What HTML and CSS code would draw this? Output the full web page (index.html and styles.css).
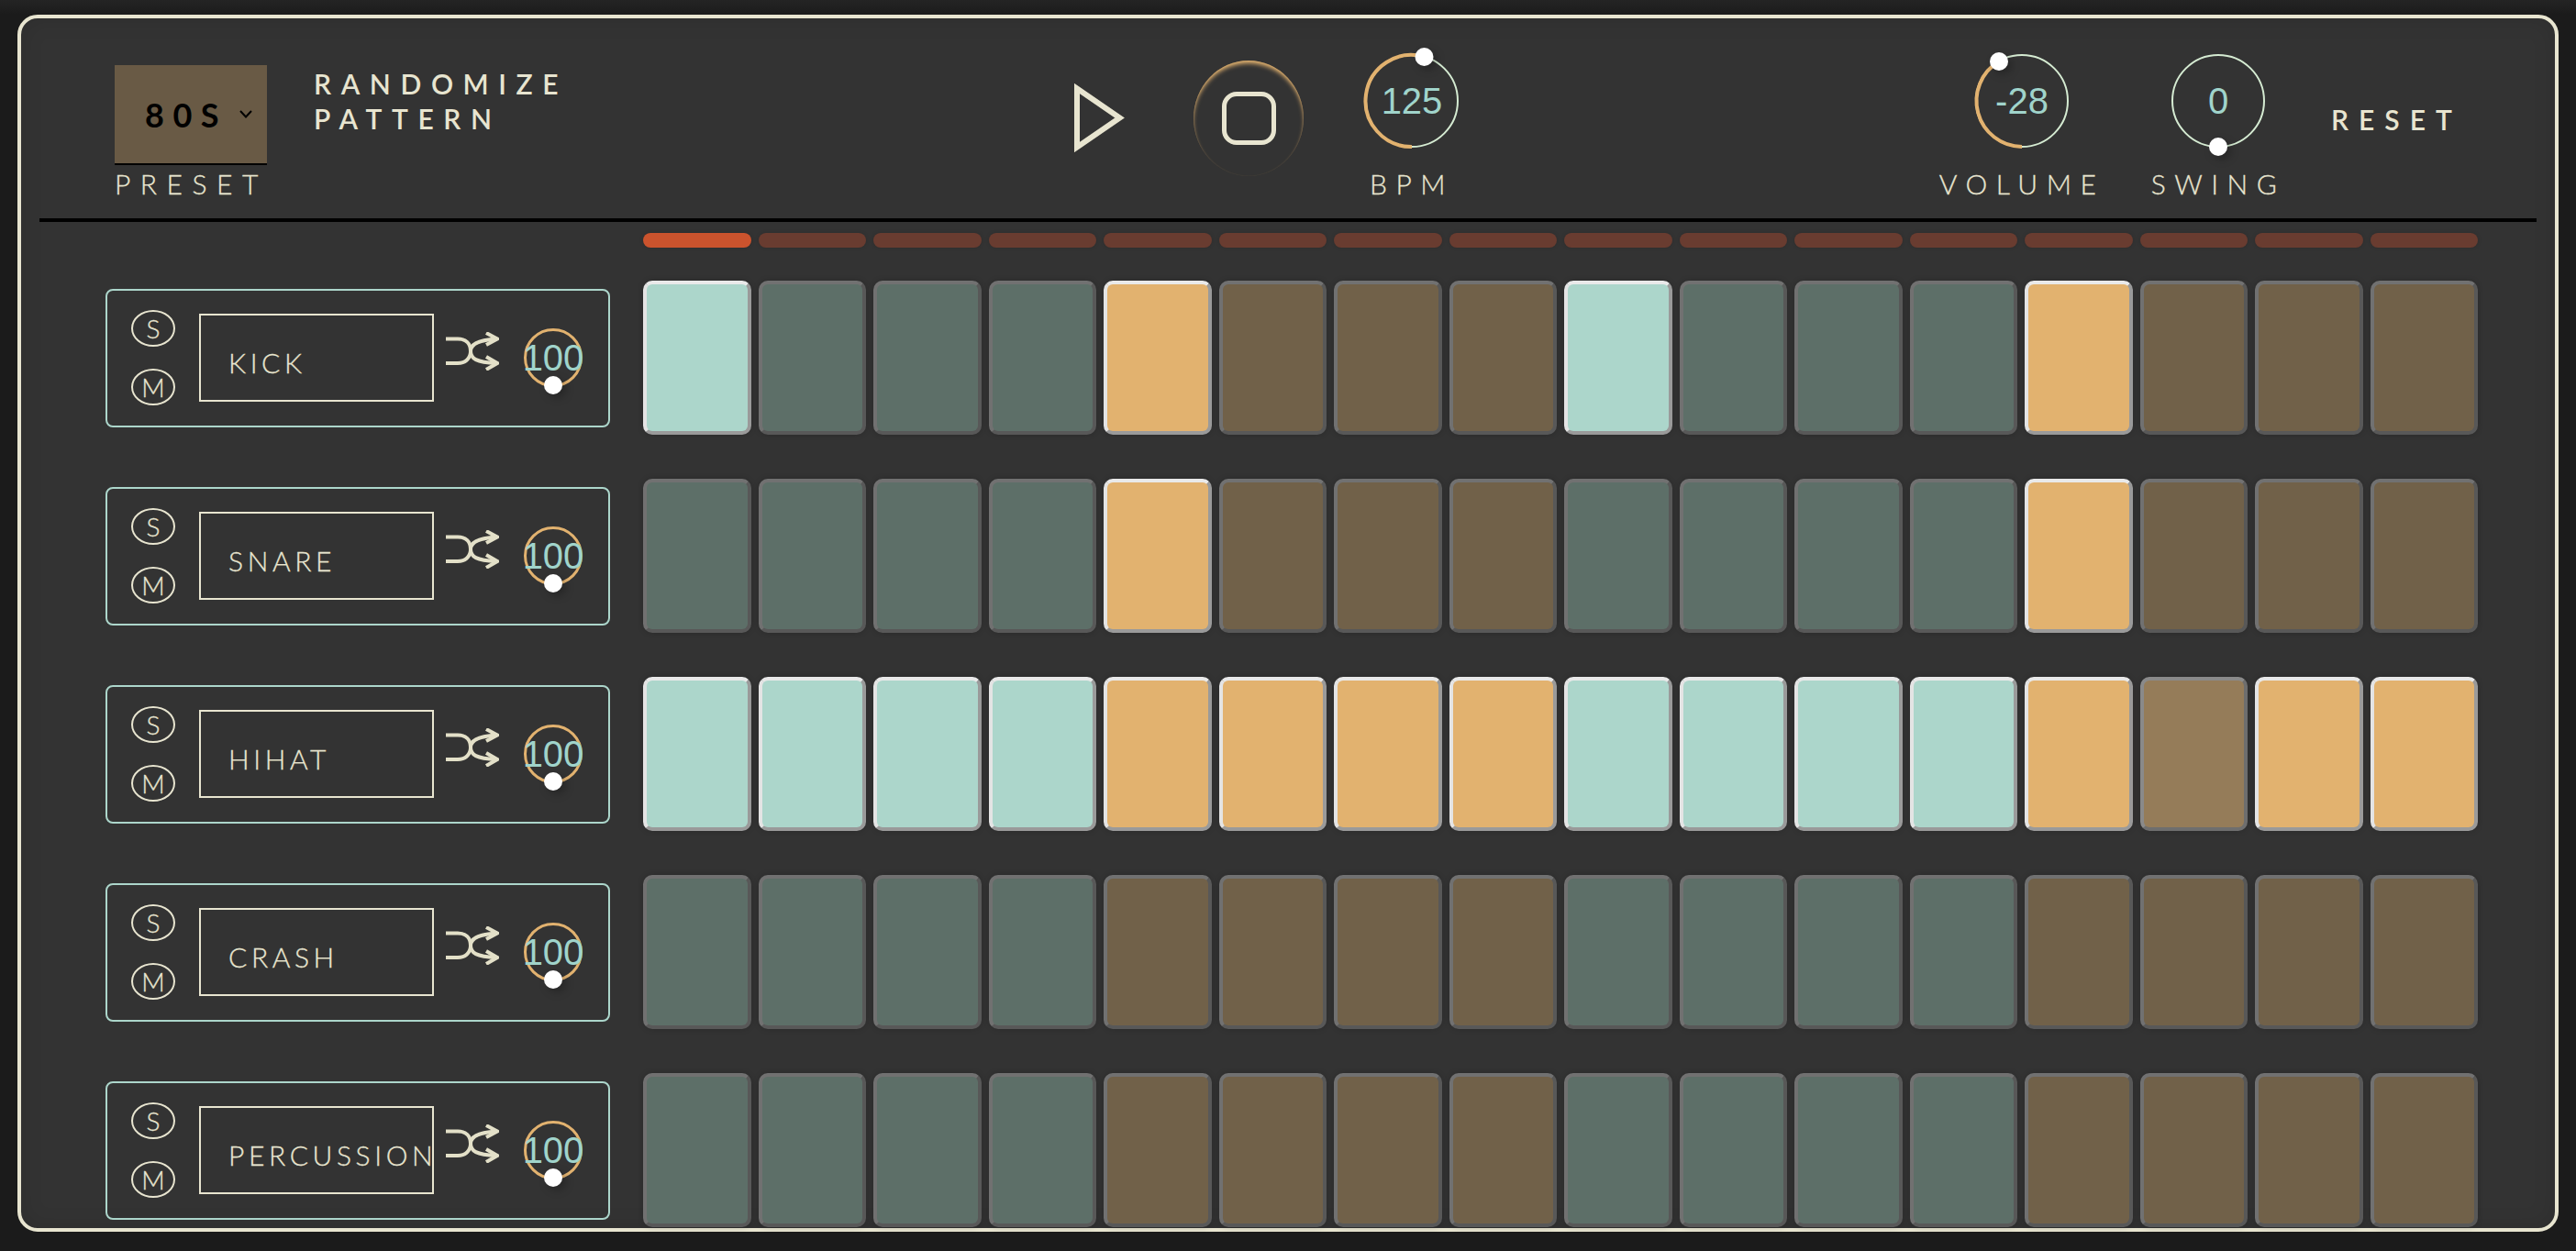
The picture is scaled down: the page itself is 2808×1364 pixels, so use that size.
FILE: index.html
```html
<!DOCTYPE html>
<html lang="en">
<head>
    <meta charset="UTF-8">
    <title>Drum Sequencer</title>
    <link rel="stylesheet" href="styles.css">
</head>
<body>
    <div class="frame">
        <header class="header">
            <div class="left">
                <div class="preset">
                    <div class="preset-select">
                        <span class="preset-value">80S</span>
                        <svg class="chevron" viewBox="0 0 14 9"><path d="M1 1l6 6.5L13 1"/></svg>
                    </div>
                    <div class="label preset-label">PRESET</div>
                </div>
                <button class="randomize">RANDOMIZE<br>PATTERN</button>
            </div>
            <svg class="play" viewBox="0 0 55 75"><polygon points="3,5.5 49.6,37.5 3,69.5"/></svg>
            <div class="stop"><span class="stop-icon"></span></div>
            <div class="control bpm">
                <div class="knob">
                    <svg viewBox="0 0 102 102">
                        <circle class="ring" cx="51" cy="51" r="50"/>
                        <path class="arc" d="M51 101A50 50 0 1 1 64.5 3"/>
                        <circle class="handle" cx="64.5" cy="3" r="10"/>
                    </svg>
                    <span class="knob-value">125</span>
                </div>
                <div class="label">BPM</div>
            </div>
            <div class="control volume">
                <div class="knob">
                    <svg viewBox="0 0 102 102">
                        <circle class="ring" cx="51" cy="51" r="50"/>
                        <path class="arc" d="M51 101A50 50 0 0 1 26 8"/>
                        <circle class="handle" cx="26" cy="8" r="10"/>
                    </svg>
                    <span class="knob-value">-28</span>
                </div>
                <div class="label">VOLUME</div>
            </div>
            <div class="control swing">
                <div class="knob">
                    <svg viewBox="0 0 102 102">
                        <circle class="ring" cx="51" cy="51" r="50"/>
                        <circle class="handle" cx="51" cy="101" r="10"/>
                    </svg>
                    <span class="knob-value">0</span>
                </div>
                <div class="label">SWING</div>
            </div>
            <button class="reset">RESET</button>
        </header>

        <div class="steps">
            <div class="step current"></div>
            <div class="step"></div><div class="step"></div><div class="step"></div>
            <div class="step"></div><div class="step"></div><div class="step"></div><div class="step"></div>
            <div class="step"></div><div class="step"></div><div class="step"></div><div class="step"></div>
            <div class="step"></div><div class="step"></div><div class="step"></div><div class="step"></div>
        </div>

        <div class="rows">
            <div class="row">
                <div class="track">
                    <div class="solo-mute"><button class="pill">S</button><button class="pill">M</button></div>
                    <div class="track-name">KICK</div>
                    <svg class="shuffle" viewBox="0 0 58 42"><path d="M0 7.5H13C22 7.5 27 13 27 21C27 29 33 33 55 34"/><path d="M0 34H13C22 34 27 28 27 21C27 14 33 9 55 7.5"/><path d="M44 1L56 7.5L44 14M44 27L56 34L44 41"/></svg>
                    <div class="knob small">
                        <svg viewBox="0 0 64 64"><circle class="arc" cx="32" cy="32" r="30.5"/><circle class="handle" cx="32" cy="62" r="10"/></svg>
                        <span class="knob-value">100</span>
                    </div>
                </div>
                <div class="pads">
                    <div class="pad on"></div><div class="pad"></div><div class="pad"></div><div class="pad"></div>
                    <div class="pad on"></div><div class="pad"></div><div class="pad"></div><div class="pad"></div>
                    <div class="pad on"></div><div class="pad"></div><div class="pad"></div><div class="pad"></div>
                    <div class="pad on"></div><div class="pad"></div><div class="pad"></div><div class="pad"></div>
                </div>
            </div>
            <div class="row">
                <div class="track">
                    <div class="solo-mute"><button class="pill">S</button><button class="pill">M</button></div>
                    <div class="track-name">SNARE</div>
                    <svg class="shuffle" viewBox="0 0 58 42"><path d="M0 7.5H13C22 7.5 27 13 27 21C27 29 33 33 55 34"/><path d="M0 34H13C22 34 27 28 27 21C27 14 33 9 55 7.5"/><path d="M44 1L56 7.5L44 14M44 27L56 34L44 41"/></svg>
                    <div class="knob small">
                        <svg viewBox="0 0 64 64"><circle class="arc" cx="32" cy="32" r="30.5"/><circle class="handle" cx="32" cy="62" r="10"/></svg>
                        <span class="knob-value">100</span>
                    </div>
                </div>
                <div class="pads">
                    <div class="pad"></div><div class="pad"></div><div class="pad"></div><div class="pad"></div>
                    <div class="pad on"></div><div class="pad"></div><div class="pad"></div><div class="pad"></div>
                    <div class="pad"></div><div class="pad"></div><div class="pad"></div><div class="pad"></div>
                    <div class="pad on"></div><div class="pad"></div><div class="pad"></div><div class="pad"></div>
                </div>
            </div>
            <div class="row">
                <div class="track">
                    <div class="solo-mute"><button class="pill">S</button><button class="pill">M</button></div>
                    <div class="track-name">HIHAT</div>
                    <svg class="shuffle" viewBox="0 0 58 42"><path d="M0 7.5H13C22 7.5 27 13 27 21C27 29 33 33 55 34"/><path d="M0 34H13C22 34 27 28 27 21C27 14 33 9 55 7.5"/><path d="M44 1L56 7.5L44 14M44 27L56 34L44 41"/></svg>
                    <div class="knob small">
                        <svg viewBox="0 0 64 64"><circle class="arc" cx="32" cy="32" r="30.5"/><circle class="handle" cx="32" cy="62" r="10"/></svg>
                        <span class="knob-value">100</span>
                    </div>
                </div>
                <div class="pads">
                    <div class="pad on"></div><div class="pad on"></div><div class="pad on"></div><div class="pad on"></div>
                    <div class="pad on"></div><div class="pad on"></div><div class="pad on"></div><div class="pad on"></div>
                    <div class="pad on"></div><div class="pad on"></div><div class="pad on"></div><div class="pad on"></div>
                    <div class="pad on"></div><div class="pad hover"></div><div class="pad on"></div><div class="pad on"></div>
                </div>
            </div>
            <div class="row">
                <div class="track">
                    <div class="solo-mute"><button class="pill">S</button><button class="pill">M</button></div>
                    <div class="track-name">CRASH</div>
                    <svg class="shuffle" viewBox="0 0 58 42"><path d="M0 7.5H13C22 7.5 27 13 27 21C27 29 33 33 55 34"/><path d="M0 34H13C22 34 27 28 27 21C27 14 33 9 55 7.5"/><path d="M44 1L56 7.5L44 14M44 27L56 34L44 41"/></svg>
                    <div class="knob small">
                        <svg viewBox="0 0 64 64"><circle class="arc" cx="32" cy="32" r="30.5"/><circle class="handle" cx="32" cy="62" r="10"/></svg>
                        <span class="knob-value">100</span>
                    </div>
                </div>
                <div class="pads">
                    <div class="pad"></div><div class="pad"></div><div class="pad"></div><div class="pad"></div>
                    <div class="pad"></div><div class="pad"></div><div class="pad"></div><div class="pad"></div>
                    <div class="pad"></div><div class="pad"></div><div class="pad"></div><div class="pad"></div>
                    <div class="pad"></div><div class="pad"></div><div class="pad"></div><div class="pad"></div>
                </div>
            </div>
            <div class="row">
                <div class="track">
                    <div class="solo-mute"><button class="pill">S</button><button class="pill">M</button></div>
                    <div class="track-name">PERCUSSION</div>
                    <svg class="shuffle" viewBox="0 0 58 42"><path d="M0 7.5H13C22 7.5 27 13 27 21C27 29 33 33 55 34"/><path d="M0 34H13C22 34 27 28 27 21C27 14 33 9 55 7.5"/><path d="M44 1L56 7.5L44 14M44 27L56 34L44 41"/></svg>
                    <div class="knob small">
                        <svg viewBox="0 0 64 64"><circle class="arc" cx="32" cy="32" r="30.5"/><circle class="handle" cx="32" cy="62" r="10"/></svg>
                        <span class="knob-value">100</span>
                    </div>
                </div>
                <div class="pads">
                    <div class="pad"></div><div class="pad"></div><div class="pad"></div><div class="pad"></div>
                    <div class="pad"></div><div class="pad"></div><div class="pad"></div><div class="pad"></div>
                    <div class="pad"></div><div class="pad"></div><div class="pad"></div><div class="pad"></div>
                    <div class="pad"></div><div class="pad"></div><div class="pad"></div><div class="pad"></div>
                </div>
            </div>
        </div>
    </div>
</body>
</html>
```
FILE: styles.css
```css
:root {
    --cream: #e8e5d0;
    --teal: #acd6cb;
    --tealdim: #5d6f68;
    --orange: #e2b26f;
    --orangedim: #716149;
    --panel: #333;
    --ringgreen: #d5ebd2;
}
* {
    margin: 0;
    padding: 0;
    box-sizing: border-box;
}
body {
    background: linear-gradient(#242424, #1b1b1b 16px);
    height: 1364px;
    overflow: hidden;
    padding-top: 16px;
    font-family: 'Lato', 'Liberation Sans', sans-serif;
    color: var(--cream);
}
button {
    background: none;
    border: none;
    color: var(--cream);
    font-family: inherit;
}
.frame {
    width: 2770px;
    height: 1327px;
    margin: 0 19px;
    background-color: var(--panel);
    border: 4px solid var(--cream);
    border-radius: 22px;
    box-shadow: inset 0 0 24px rgba(0, 0, 0, .12);
}

/* top bar */
.header {
    display: flex;
    align-items: flex-start;
    height: 222px;
    margin: 0 20px;
    border-bottom: 4px solid #000;
}
.left {
    display: flex;
    align-items: flex-start;
    width: 1128px;
    padding-left: 82px;
}
.preset {
    width: 166px;
    margin-top: 51px;
}
.preset-select {
    display: flex;
    align-items: center;
    height: 109px;
    padding-left: 33px;
    background-color: #695a45;
    border-bottom: 2px solid #000;
}
.preset-value {
    font-size: 36px;
    font-weight: 700;
    letter-spacing: 9.5px;
    color: #000;
}
.chevron {
    width: 14px;
    height: 9px;
    margin-left: 13px;
    fill: none;
    stroke: #000;
    stroke-width: 2;
}
.label {
    font-size: 30px;
    font-weight: 300;
    line-height: 36px;
    letter-spacing: 9.5px;
    white-space: nowrap;
    -webkit-text-stroke: .3px currentColor;
}
.preset-label {
    margin-top: 2px;
    letter-spacing: 10.5px;
}
.randomize {
    margin: 52px 0 0 51px;
    font-size: 30px;
    font-weight: 600;
    line-height: 38px;
    letter-spacing: 10.6px;
    text-align: left;
}
.play {
    flex: none;
    width: 55px;
    height: 75px;
    margin-top: 71px;
    fill: none;
    stroke: var(--cream);
    stroke-width: 6;
}
.stop {
    flex: none;
    display: flex;
    align-items: center;
    justify-content: center;
    width: 120px;
    height: 126px;
    margin: 46px 0 0 75px;
    border-radius: 50%;
    box-shadow: inset 0 4px 5px -1px var(--orange), inset 0 1px 2px rgba(226, 178, 111, .45);
}
.stop-icon {
    width: 59px;
    height: 58px;
    border: 5px solid var(--cream);
    border-radius: 16px;
}
.control {
    flex: none;
    display: flex;
    flex-direction: column;
    align-items: center;
    width: 102px;
    margin-top: 39px;
}
.control .label {
    margin-top: 21px;
}
.bpm {
    margin-left: 67px;
}
.volume {
    margin-left: 563px;
}
.swing {
    margin-left: 112px;
}
.reset {
    margin: 92px 0 0 72px;
    font-size: 30px;
    font-weight: 600;
    line-height: 36px;
    letter-spacing: 11px;
}

/* knobs */
.knob {
    position: relative;
    display: flex;
    align-items: center;
    justify-content: center;
    flex: none;
    width: 102px;
    height: 102px;
}
.knob svg {
    position: absolute;
    inset: 0;
    width: 100%;
    height: 100%;
    overflow: visible;
}
.knob-value {
    position: relative;
    font-family: 'Liberation Sans', sans-serif;
    font-size: 40px;
    color: #a0d4cb;
}
.ring {
    fill: none;
    stroke: var(--ringgreen);
    stroke-width: 2;
}
.arc {
    fill: none;
    stroke: var(--orange);
    stroke-width: 4;
}
.handle {
    fill: #fff;
    filter: drop-shadow(4px 4px 4px rgba(0, 0, 0, .25));
}
.knob.small {
    width: 64px;
    height: 64px;
    margin-left: 27px;
}
.small .arc {
    stroke-width: 3;
}

/* sequencer */
.steps {
    display: grid;
    grid-template-columns: repeat(16, 1fr);
    gap: 8px;
    width: 2000px;
    height: 16px;
    margin: 12px 0 0 678px;
}
.step {
    background-color: #693c30;
    border-radius: 8px;
    box-shadow: 0 0 4px rgba(0, 0, 0, .15);
}
.step.current {
    background-color: #cb532d;
}
.rows {
    display: flex;
    flex-direction: column;
    gap: 48px;
    margin-top: 36px;
    padding-left: 92px;
}
.row {
    display: flex;
    align-items: center;
    gap: 36px;
}
.track {
    display: flex;
    align-items: center;
    flex: none;
    width: 550px;
    height: 151px;
    padding-left: 26px;
    border: 2px solid var(--teal);
    border-radius: 8px;
}
.solo-mute {
    display: flex;
    flex-direction: column;
    gap: 24px;
}
.pill {
    width: 48px;
    height: 40px;
    border: 2px solid var(--cream);
    border-radius: 50%;
    font-size: 28px;
    font-weight: 300;
    line-height: 34px;
    -webkit-text-stroke: .3px currentColor;
}
.track-name {
    flex: none;
    width: 256px;
    height: 96px;
    margin-left: 26px;
    padding: 33px 0 0 30px;
    border: 2px solid var(--cream);
    font-size: 30px;
    font-weight: 300;
    line-height: 36px;
    letter-spacing: 4.6px;
    white-space: nowrap;
    -webkit-text-stroke: .3px currentColor;
}
.shuffle {
    flex: none;
    width: 58px;
    height: 42px;
    margin: 0 0 14px 13px;
    fill: none;
    stroke: #e3e0c8;
    stroke-width: 4;
}
.pads {
    display: grid;
    grid-template-columns: repeat(16, 1fr);
    gap: 8px;
    flex: none;
    width: 2000px;
    height: 168px;
}
.pad {
    --pad: var(--tealdim);
    background-color: var(--pad);
    border: 4px solid;
    border-color: #717171 #585858 #585858 #717171;
    border-radius: 10px;
    box-shadow: 0 0 6px rgba(0, 0, 0, .2);
}
.pad:nth-child(8n+5),
.pad:nth-child(8n+6),
.pad:nth-child(8n+7),
.pad:nth-child(8n+8) {
    --pad: var(--orangedim);
}
.pad.on {
    --pad: var(--teal);
    border-color: #e9e9e9 #9a9a9a #9a9a9a #e4e4e4;
}
.pad.on:nth-child(8n+5),
.pad.on:nth-child(8n+6),
.pad.on:nth-child(8n+7),
.pad.on:nth-child(8n+8) {
    --pad: var(--orange);
}
.pad.hover {
    --pad: #957c59;
    border-color: #8a8a8a #6e6e6e #6e6e6e #8a8a8a;
}
```
